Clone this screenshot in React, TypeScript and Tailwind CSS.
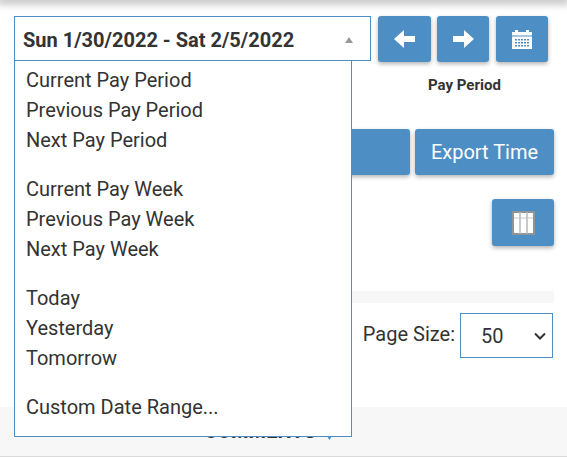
const FONT = "font-['Roboto',sans-serif]"

const menuGroups = [
  ["Current Pay Period", "Previous Pay Period", "Next Pay Period"],
  ["Current Pay Week", "Previous Pay Week", "Next Pay Week"],
  ["Today", "Yesterday", "Tomorrow"],
  ["Custom Date Range..."],
]

function ArrowLeft() {
  return (
    <svg width="21" height="18" viewBox="0 0 21 18" fill="#fff">
      <path d="M0 9 10 0V6H21V12H10V18Z" />
    </svg>
  )
}

function ArrowRight() {
  return (
    <svg width="21" height="18" viewBox="0 0 21 18" fill="#fff">
      <path d="M21 9 11 0V6H0V12H11V18Z" />
    </svg>
  )
}

function CalendarIcon() {
  return (
    <svg width="20" height="20" viewBox="0 0 20 20" fill="#fff">
      <path d="M0 3H3V1H6V3H14V1H17V3H20V6.5H0Z" />
      <path
        fillRule="evenodd"
        d="M0 7.5H20V20H0ZM3 10V11.5H5V10ZM6 10V11.5H8V10ZM9 10V11.5H11V10ZM12 10V11.5H14V10ZM15 10V11.5H17V10ZM3 13V14.5H5V13ZM6 13V14.5H8V13ZM9 13V14.5H11V13ZM12 13V14.5H14V13ZM15 13V14.5H17V13ZM3 16V17.5H5V16ZM6 16V17.5H8V16ZM9 16V17.5H11V16ZM12 16V17.5H14V16ZM15 16V17.5H17V16Z"
      />
    </svg>
  )
}

function ColumnsIcon() {
  return (
    <svg width="23" height="24" viewBox="0 0 23 24">
      <rect x="1" y="1" width="21" height="22" fill="#fff" stroke="#8f9496" strokeWidth="2" />
      <path d="M8 1V23M15 1V23" stroke="#b4b9bb" strokeWidth="1.5" />
      <path d="M2 7H21" stroke="#c4c8ca" strokeWidth="1" />
    </svg>
  )
}

function SortIcon() {
  return (
    <svg className="ml-[10px]" width="11" height="18" viewBox="0 0 11 18" fill="#4d8fc5">
      <path d="M1.5 0H5V12H7.5L3.25 18 0 12H1.5Z" />
      <path d="M8 0H11V15H8Z" />
    </svg>
  )
}

export default function App() {
  return (
    <div className={`relative h-[458px] w-[567px] overflow-hidden bg-white ${FONT} text-[#333]`}>
      {/* shadow from the header above */}
      <div className="h-0 w-full shadow-[0_0_9px_3px_rgba(0,0,0,0.35)]" />

      <div className="flex pl-[14px] pt-4">
        <div className="flex h-[45px] w-[357px] items-center justify-between border border-[#4d8fc5] pl-2 pr-[17px] pt-[2px]">
          <span className="text-[20px] font-bold">Sun 1/30/2022 - Sat 2/5/2022</span>
          <span className="h-0 w-0 border-x-[4px] border-b-[6px] border-x-transparent border-b-[#999]" />
        </div>
        <div className="ml-[7px]">
          <div className="flex">
            <button className="flex h-[46px] w-[53px] items-center justify-center rounded-[3px] bg-[#4d8fc5] shadow-[0_2px_4px_rgba(0,0,0,0.3)]">
              <ArrowLeft />
            </button>
            <button className="ml-[6px] flex h-[46px] w-[52px] items-center justify-center rounded-[3px] bg-[#4d8fc5] shadow-[0_2px_4px_rgba(0,0,0,0.3)]">
              <ArrowRight />
            </button>
            <button className="ml-[7px] flex h-[46px] w-[52px] items-center justify-center rounded-[3px] bg-[#4d8fc5] shadow-[0_2px_4px_rgba(0,0,0,0.3)]">
              <CalendarIcon />
            </button>
          </div>
          <div className="mt-[15px] pl-[50px] text-[15px] font-bold leading-4">Pay Period</div>
        </div>
      </div>

      <div className="mt-[36px] flex justify-end gap-[5px] pr-[13px]">
        <button className="h-[46px] w-[100px] rounded-[3px] bg-[#4d8fc5] shadow-[0_2px_4px_rgba(0,0,0,0.3)]" />
        <button className="h-[46px] w-[139px] rounded-[3px] bg-[#4d8fc5] text-[20px] text-white shadow-[0_2px_4px_rgba(0,0,0,0.3)]">
          Export Time
        </button>
      </div>

      <div className="mt-6 flex justify-end pr-[13px]">
        <button className="flex h-[47px] w-[62px] items-center justify-center rounded-[3px] bg-[#4d8fc5] shadow-[0_2px_4px_rgba(0,0,0,0.3)]">
          <ColumnsIcon />
        </button>
      </div>

      <div className="ml-[14px] mr-[13px] mt-[45px] h-3 bg-[#f7f7f7]" />

      <div className="mt-[10px] flex items-center justify-end gap-[5px] pr-[14px]">
        <span className="pb-[3px] text-[20px]">Page Size:</span>
        <div className="flex h-[45px] w-[93px] items-center justify-between border border-[#4d8fc5] pl-5 pr-[6px]">
          <span className="text-[20px]">50</span>
          <svg width="12" height="8" viewBox="0 0 12 8" fill="none" stroke="#333" strokeWidth="2">
            <path d="M1 1.5 6 6.5 11 1.5" />
          </svg>
        </div>
      </div>

      <div className="mt-[49px] flex h-[50px] items-center justify-center border-b border-[#d9d9d9] bg-[#f7f7f7] pb-[2px] pr-[26px] text-[20px] font-bold">
        COMMENTS
        <SortIcon />
      </div>

      {/* open dropdown */}
      <div className="absolute left-[14px] top-[61px] h-[376px] w-[338px] border border-t-0 border-[#4d8fc5] bg-white pl-[11px] pt-1 text-[20px] leading-[30px]">
        {menuGroups.map((group) => (
          <div key={group[0]} className="mb-[19px]">
            {group.map((item) => (
              <div key={item}>{item}</div>
            ))}
          </div>
        ))}
      </div>
    </div>
  )
}
